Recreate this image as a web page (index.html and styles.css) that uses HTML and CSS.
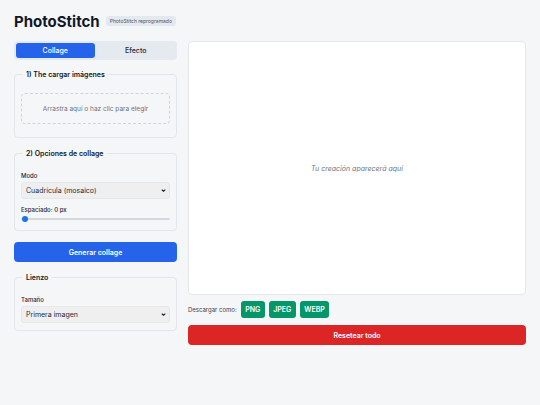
FILE: index.html
```html
<!DOCTYPE html>
<html lang="es">
<head>
    <meta charset="UTF-8">
    <meta name="viewport" content="width=device-width, initial-scale=1.0">
    <title>PhotoStitch</title>
    <link rel="stylesheet" href="styles.css">
</head>
<body>
    <header class="top">
        <h1>PhotoStitch</h1>
        <span class="badge">PhotoStitch reprogramado</span>
    </header>
    <main class="layout">
        <aside class="side">
            <div class="tabs">
                <div class="tab active">Collage</div>
                <div class="tab">Efecto</div>
            </div>
            <fieldset class="box">
                <legend>1) The cargar imágenes</legend>
                <div class="drop">Arrastra aquí o haz clic para elegir</div>
            </fieldset>
            <fieldset class="box">
                <legend>2) Opciones de collage</legend>
                <label class="lbl" for="mode">Modo</label>
                <div class="sel-wrap">
                    <select id="mode" class="sel">
                        <option>Cuadrícula (mosaico)</option>
                    </select>
                    <svg class="chev" viewBox="0 0 8 8"><path d="M2 3l2 2 2-2" fill="none" stroke="#111" stroke-width="1.2"/></svg>
                </div>
                <label class="lbl lbl-tight" for="gap">Espaciado: 0 px</label>
                <input id="gap" class="range" type="range" min="0" max="50" value="0">
            </fieldset>
            <button class="btn primary">Generar collage</button>
            <fieldset class="box">
                <legend>Lienzo</legend>
                <label class="lbl" for="size">Tamaño</label>
                <div class="sel-wrap">
                    <select id="size" class="sel">
                        <option>Primera imagen</option>
                    </select>
                    <svg class="chev" viewBox="0 0 8 8"><path d="M2 3l2 2 2-2" fill="none" stroke="#111" stroke-width="1.2"/></svg>
                </div>
            </fieldset>
        </aside>
        <section class="main">
            <div class="preview"><em>Tu creación aparecerá aquí</em></div>
            <div class="downloads">
                <span>Descargar como:</span>
                <button class="dl">PNG</button>
                <button class="dl">JPEG</button>
                <button class="dl">WEBP</button>
            </div>
            <button class="btn danger">Resetear todo</button>
        </section>
    </main>
</body>
</html>
```

FILE: styles.css
```css
body {
    margin: 0;
    padding: 9px 14px;
    background: #f5f6f8;
    font-family: Inter, "Noto Sans", sans-serif;
    color: #1f2937;
}
.top {
    display: flex;
    align-items: center;
    gap: 6px;
    height: 24px;
    margin-bottom: 8px;
}
.top h1 {
    margin: 0;
    font-size: 15px;
    font-weight: 700;
    color: #111827;
}
.badge {
    background: #e4e8ef;
    color: #4b5563;
    font-size: 5px;
    padding: 2px 4px;
    border-radius: 3px;
}
.layout {
    display: grid;
    grid-template-columns: 163px 1fr;
    gap: 11px;
}
.side {
    display: flex;
    flex-direction: column;
}
.tabs {
    display: flex;
    background: #e5e9f0;
    border-radius: 4px;
    padding: 2px;
    gap: 2px;
    margin-bottom: 10px;
}
.tab {
    flex: 1;
    text-align: center;
    font-size: 7px;
    font-weight: 500;
    height: 15px;
    line-height: 15px;
    border-radius: 3px;
    color: #1f2937;
}
.tab.active {
    background: #2563eb;
    color: #fff;
}
.box {
    border: 1px solid #e2e5ea;
    border-radius: 4px;
    margin: 0 0 11px;
    padding: 4px 6px 7px;
    background: #f5f6f8;
}
.box legend {
    font-size: 7px;
    font-weight: 600;
    padding: 0 3px;
    margin-left: 2px;
    color: #111827;
}
.drop {
    margin-top: 10px;
    margin-bottom: 6px;
    border: 1px dashed #cfd5e0;
    border-radius: 4px;
    height: 29px;
    display: flex;
    align-items: center;
    justify-content: center;
    font-size: 6.5px;
    color: #6b7280;
}
.lbl {
    display: block;
    font-size: 6px;
    font-weight: 500;
    margin: 10px 0 3px;
}
.lbl-tight {
    margin-top: 7px;
}
.sel-wrap {
    position: relative;
}
.sel {
    display: block;
    width: 100%;
    height: 17px;
    border: 1px solid #e5e7eb;
    border-radius: 3px;
    background: #efefef;
    font-family: Inter, sans-serif;
    font-size: 7px;
    color: #1f2937;
    padding: 0 4px;
    appearance: none;
    -webkit-appearance: none;
}
.chev {
    position: absolute;
    right: 3px;
    top: 5px;
    width: 7px;
    height: 7px;
    pointer-events: none;
}
.range {
    display: block;
    width: 100%;
    margin: 3px 0 1px;
    height: 6px;
    appearance: none;
    -webkit-appearance: none;
    background: transparent;
}
.range::-webkit-slider-runnable-track {
    height: 2px;
    background: #eceef1;
    border: 1px solid #d4d7dc;
    border-radius: 2px;
}
.range::-webkit-slider-thumb {
    -webkit-appearance: none;
    width: 6px;
    height: 6px;
    border-radius: 50%;
    background: #1a73e8;
    margin-top: -3px;
}
.btn {
    border: none;
    border-radius: 4px;
    color: #fff;
    font-family: Inter, sans-serif;
    font-size: 7px;
    font-weight: 600;
    height: 20px;
    width: 100%;
}
.primary {
    background: #2563eb;
    margin-bottom: 11px;
}
.danger {
    background: #dc2626;
}
.main {
    display: flex;
    flex-direction: column;
}
.preview {
    height: 252px;
    background: #fff;
    border: 1px solid #e5e7eb;
    border-radius: 4px;
    display: flex;
    align-items: center;
    justify-content: center;
    font-size: 7px;
    color: #6b7280;
}
.downloads {
    display: flex;
    align-items: center;
    gap: 4px;
    margin: 6px 0 7px;
    font-size: 6px;
    color: #374151;
}
.dl {
    background: #059669;
    color: #fff;
    border: none;
    border-radius: 3px;
    height: 17px;
    padding: 0 4.5px;
    font-family: Inter, sans-serif;
    font-size: 7px;
    font-weight: 600;
}
```
